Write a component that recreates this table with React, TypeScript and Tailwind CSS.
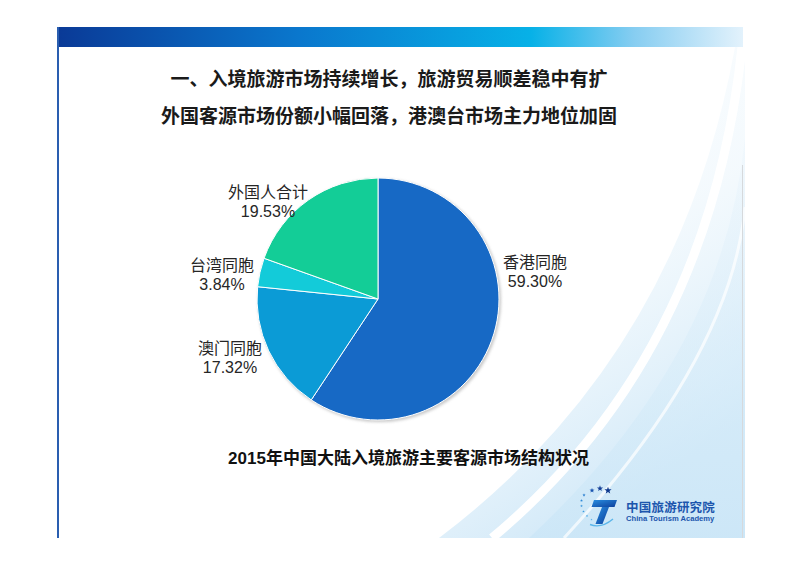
const slices = [
  { name: "香港", d: "M208,129 L208,8 A121,121 0 1 1 141.24,229.93 Z", fill: "#1769c5" },
  { name: "澳门", d: "M208,129 L141.24,229.93 A121,121 0 0 1 87.63,116.71 Z", fill: "#0b9bd6" },
  { name: "台湾", d: "M208,129 L87.63,116.71 A121,121 0 0 1 94.05,88.28 Z", fill: "#13cbd9" },
  { name: "外国人", d: "M208,129 L94.05,88.28 A121,121 0 0 1 208,8 Z", fill: "#13cd97" },
];

const labels = [
  { x: 98, y: 28, name: "外国人合计", pct: "19.53%" },
  { x: 52, y: 101, name: "台湾同胞", pct: "3.84%" },
  { x: 60, y: 184, name: "澳门同胞", pct: "17.32%" },
  { x: 365, y: 98, name: "香港同胞", pct: "59.30%" },
];

function PieChart() {
  return (
    <div className="relative ml-[111px] mt-[43px] h-[256px] w-[420px] font-['Liberation_Sans','Noto_Sans_CJK_SC',sans-serif]">
      <svg width="420" height="256" viewBox="0 0 420 256">
        <defs>
          <filter id="pieShadow" x="-10%" y="-10%" width="120%" height="120%">
            <feGaussianBlur stdDeviation="1.6" />
          </filter>
        </defs>
        <circle cx="209.5" cy="130.5" r="121.5" fill="#9a9a9a" opacity="0.55" filter="url(#pieShadow)" />
        {slices.map((s) => (
          <path key={s.name} d={s.d} fill={s.fill} stroke="#ffffff" strokeWidth="1" strokeLinejoin="round" />
        ))}
        {labels.map((l) => (
          <g key={l.name} fill="#262626" fontSize="16" textAnchor="middle">
            <text x={l.x} y={l.y}>{l.name}</text>
            <text x={l.x} y={l.y + 19}>{l.pct}</text>
          </g>
        ))}
      </svg>
    </div>
  );
}

function Star({ x, y, r, fill }: { x: number; y: number; r: number; fill: string }) {
  const pts: string[] = [];
  for (let i = 0; i < 10; i++) {
    const a = (Math.PI / 5) * i - Math.PI / 2;
    const rr = i % 2 === 0 ? r : r * 0.42;
    pts.push(`${(x + rr * Math.cos(a)).toFixed(2)},${(y + rr * Math.sin(a)).toFixed(2)}`);
  }
  return <polygon points={pts.join(" ")} fill={fill} />;
}

function Logo() {
  return (
    <div className="mt-[14px] flex items-start justify-end pr-[28px]">
      <svg width="40" height="44" viewBox="0 0 40 44">
        <defs>
          <linearGradient id="tGrad" x1="0" y1="0" x2="1" y2="1">
            <stop offset="0" stopColor="#2a8ee0" />
            <stop offset="1" stopColor="#0c3f9c" />
          </linearGradient>
        </defs>
        <Star x={15} y={5.5} r={2.6} fill="#1a55b0" />
        <Star x={23} y={3.5} r={3.2} fill="#143f96" />
        <Star x={31} y={5.5} r={3.8} fill="#0f3a8e" />
        <Star x={7} y={10} r={1.7} fill="#2b7fd0" />
        <Star x={4.5} y={15.5} r={1.5} fill="#2f8ad8" />
        <Star x={4.5} y={21} r={1.4} fill="#3593dc" />
        <Star x={6.5} y={26.5} r={1.3} fill="#3a9be0" />
        <Star x={10} y={31} r={1.2} fill="#46a6e4" />
        <Star x={14.5} y={34.5} r={1.1} fill="#52b0e8" />
        <path d="M17,15 L40,15 L37.5,22 L14.5,22 Z" fill="url(#tGrad)" />
        <path d="M25,22 L32,22 L25.5,39 L18.5,39 Z" fill="url(#tGrad)" />
        <path d="M13,39.5 Q24,44 36,34" fill="none" stroke="#5bb6ea" strokeWidth="1.4" />
      </svg>
      <div className="ml-[9px] mt-[15px] flex flex-col font-bold text-[#1c56ad]">
        <span className="font-['Noto_Sans_CJK_SC',sans-serif] text-[12.5px] leading-[14px] tracking-[0.2px]">中国旅游研究院</span>
        <span className="mt-[1px] font-['Liberation_Sans',sans-serif] text-[7.6px] leading-[8px]">China Tourism Academy</span>
      </div>
    </div>
  );
}

function Swoosh() {
  return (
    <svg className="pointer-events-none absolute inset-0" width="686" height="511" viewBox="0 0 686 511">
      <defs>
        <linearGradient id="swA" x1="0" y1="0" x2="0.4" y2="1">
          <stop offset="0" stopColor="#eef7fd" stopOpacity="0.15" />
          <stop offset="0.55" stopColor="#e6f3fb" stopOpacity="0.45" />
          <stop offset="1" stopColor="#d2e9f8" />
        </linearGradient>
        <linearGradient id="swB" x1="0" y1="0" x2="0" y2="1">
          <stop offset="0" stopColor="#e3f1fb" stopOpacity="0.3" />
          <stop offset="0.6" stopColor="#d6ecf9" stopOpacity="0.7" />
          <stop offset="1" stopColor="#cbe6f7" />
        </linearGradient>
      </defs>
      <path d="M380,511 Q620,330 676,20 L686,20 L686,511 Z" fill="url(#swA)" />
      <path d="M433,511 Q650,330 683,20" fill="none" stroke="#ffffff" strokeWidth="9" />
      <path d="M470,511 Q665,330 686,110 L686,511 Z" fill="url(#swB)" opacity="0.8" />
      <path d="M505,511 Q672,330 686,180" fill="none" stroke="#ffffff" strokeWidth="3" opacity="0.7" />
    </svg>
  );
}

export default function App() {
  return (
    <div className="h-[565px] w-[800px] overflow-hidden bg-white pl-[57px] pt-[27px]">
      <div className="relative flex h-[511px] w-[686px] flex-col border-l-2 border-[#2a5eb0]">
        <Swoosh />
        <div className="absolute right-0 top-[138px] bottom-0 w-px bg-[#d6d9dc]" />

        <div className="relative h-[20px] w-full bg-[linear-gradient(to_right,#0a3a97_0%,#0a77cd_35%,#07b1e7_69%,#86cdf1_84%,#e3f2fc_100%)]" />

        <div className="relative flex flex-col items-center pr-[24px] font-['Noto_Sans_CJK_SC',sans-serif] text-[19px] font-bold text-[#1a1a1a]">
          <p className="mt-[19px] leading-[24px]">一、入境旅游市场持续增长，旅游贸易顺差稳中有扩</p>
          <p className="mt-[13px] leading-[24px]">外国客源市场份额小幅回落，港澳台市场主力地位加固</p>
        </div>

        <PieChart />

        <p className="relative mt-[21px] pl-[15px] text-center font-['Liberation_Sans','Noto_Sans_CJK_SC',sans-serif] text-[17px] font-bold leading-[24px] text-[#111]">
          2015年中国大陆入境旅游主要客源市场结构状况
        </p>

        <div className="relative">
          <Logo />
        </div>
      </div>
    </div>
  );
}
